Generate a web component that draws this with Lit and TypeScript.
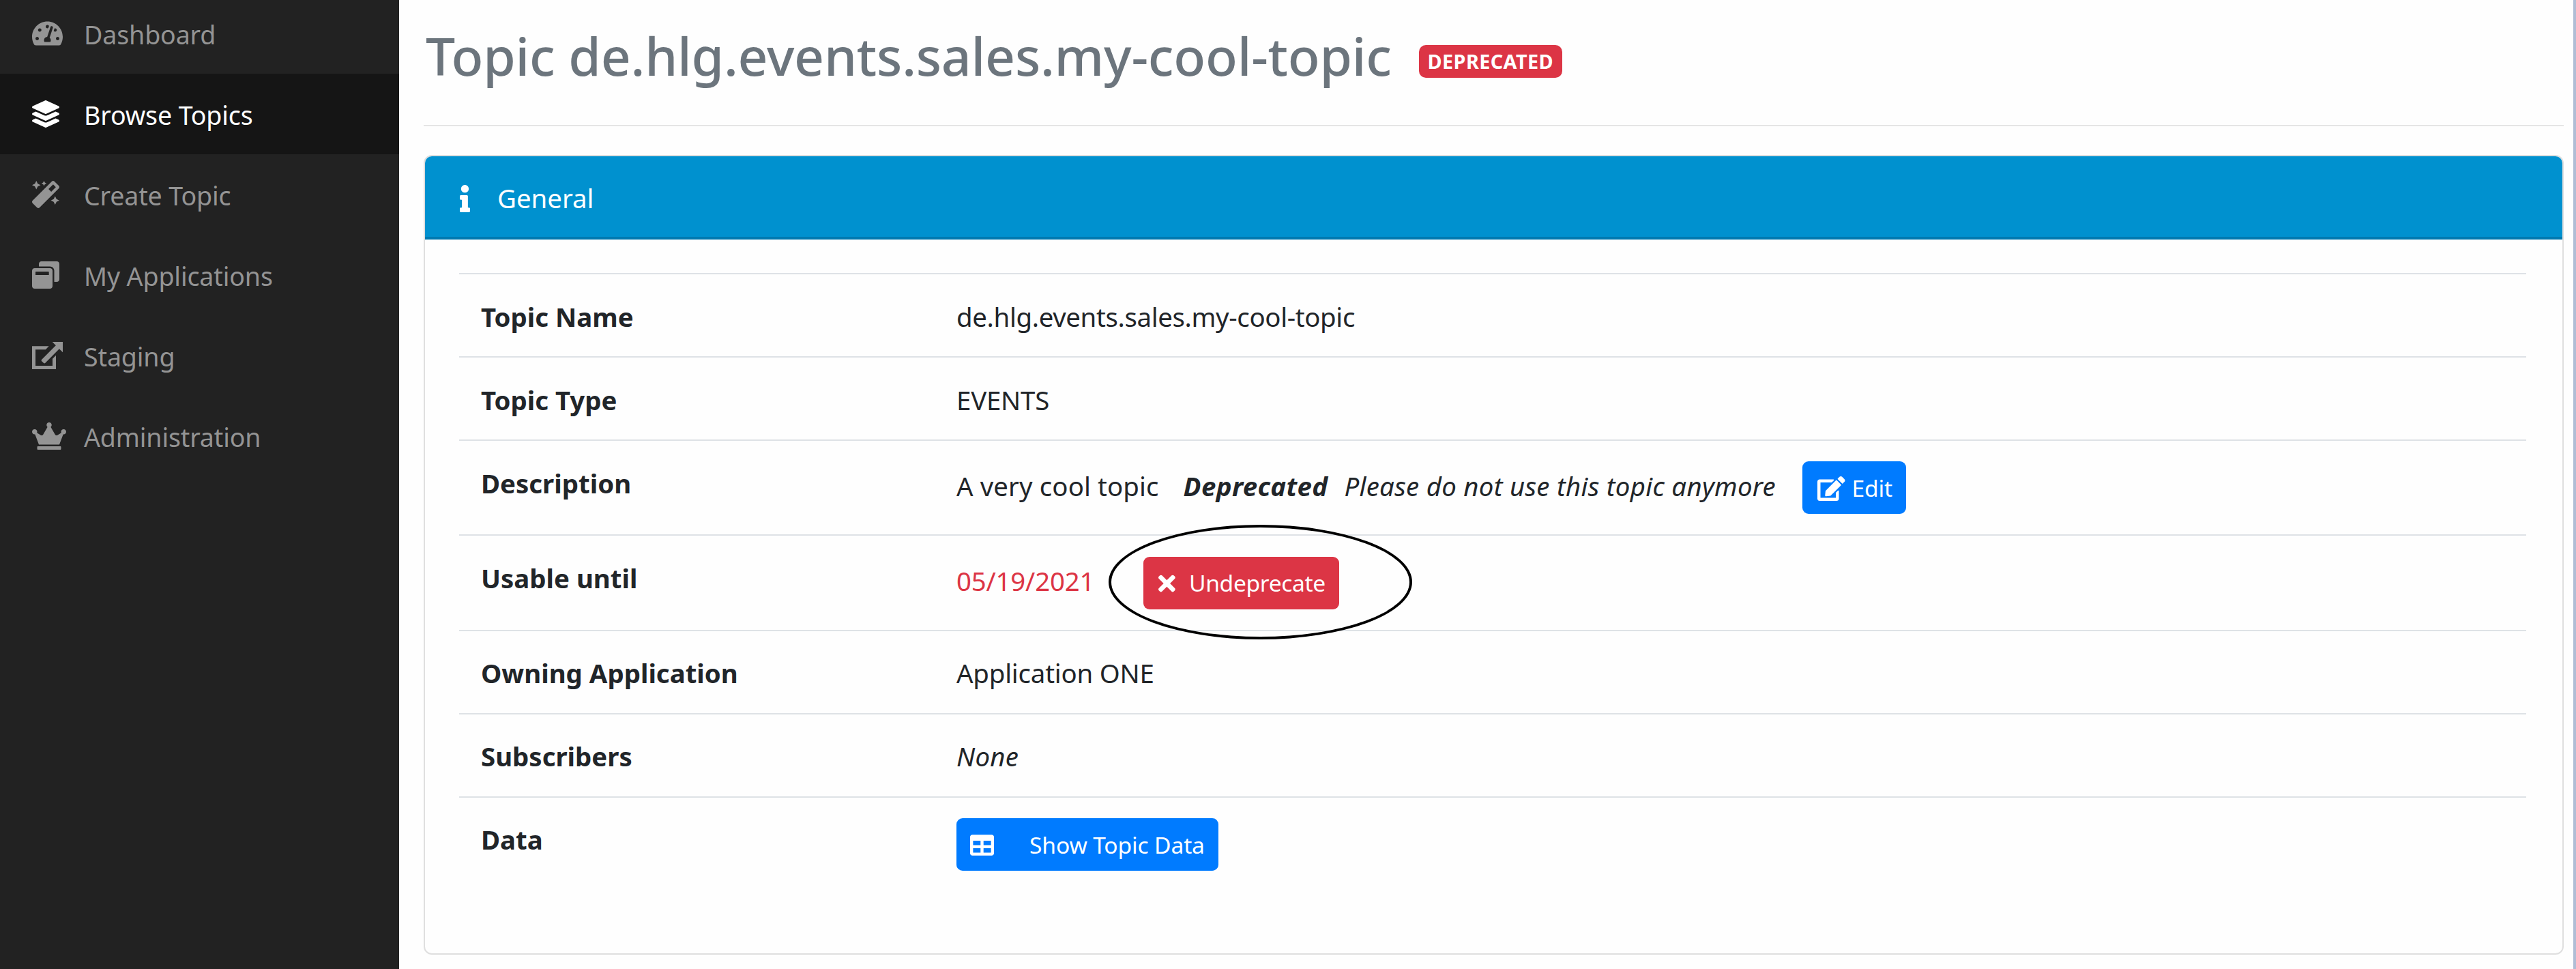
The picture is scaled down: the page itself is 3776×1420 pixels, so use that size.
import { LitElement, html, css } from 'lit';
import { customElement } from 'lit/decorators.js';

const ICONS: Record<string, [number, number, string]> = {
  gauge: [576, 512, 'M288 32C128.94 32 0 160.94 0 320c0 52.8 14.25 102.26 39.06 144.8 5.61 9.62 16.3 15.2 27.44 15.2h443c11.14 0 21.83-5.58 27.44-15.2C561.75 422.26 576 372.8 576 320c0-159.06-128.94-288-288-288zm0 64c14.71 0 26.58 10.13 30.32 23.65-1.11 2.26-2.64 4.23-3.45 6.67l-9.22 27.67c-5.13 3.49-10.97 6.01-17.64 6.01-17.67 0-32-14.33-32-32S270.33 96 288 96zM96 384c-17.67 0-32-14.33-32-32s14.33-32 32-32 32 14.33 32 32-14.33 32-32 32zm48-160c-17.67 0-32-14.33-32-32s14.33-32 32-32 32 14.33 32 32-14.33 32-32 32zm246.77-72.41l-61.33 184C343.13 347.33 352 364.54 352 384c0 11.72-3.38 22.55-8.88 32H232.88c-5.5-9.45-8.88-20.28-8.88-32 0-33.94 26.5-61.43 59.9-63.59l61.34-184.01c4.17-12.56 17.73-19.45 30.36-15.17 12.57 4.19 19.35 17.79 15.17 30.36zm14.66 57.2l15.52-46.55c3.47-1.29 7.13-2.23 11.05-2.23 17.67 0 32 14.33 32 32s-14.33 32-32 32c-11.38-.01-20.89-6.28-26.57-15.22zM480 384c-17.67 0-32-14.33-32-32s14.33-32 32-32 32 14.33 32 32-14.33 32-32 32z'],
  layers: [512, 512, 'M12.41 148.02l232.94 105.67c6.8 3.09 14.49 3.09 21.29 0l232.94-105.67c16.55-7.51 16.55-32.52 0-40.03L266.65 2.31a25.607 25.607 0 0 0-21.29 0L12.41 107.98c-16.55 7.51-16.55 32.53 0 40.04zm487.18 88.28l-58.09-26.33-161.64 73.27c-7.56 3.43-15.59 5.17-23.86 5.17s-16.29-1.74-23.86-5.17L70.51 209.97l-58.1 26.33c-16.55 7.5-16.55 32.5 0 40l232.94 105.59c6.8 3.08 14.49 3.08 21.29 0L499.59 276.3c16.55-7.5 16.55-32.5 0-40zm0 127.8l-57.87-26.23-161.86 73.37c-7.56 3.43-15.59 5.17-23.86 5.17s-16.29-1.74-23.86-5.17L70.29 337.87 12.41 364.1c-16.55 7.5-16.55 32.5 0 40l232.94 105.59c6.8 3.08 14.49 3.08 21.29 0L499.59 404.1c16.55-7.5 16.55-32.5 0-40z'],
  wand: [512, 512, 'M224 96l16-32 32-16-32-16-16-32-16 32-32 16 32 16 16 32zM80 160l26.66-53.33L160 80l-53.34-26.67L80 0 53.34 53.33 0 80l53.34 26.67L80 160zm352 128l-26.66 53.33L352 368l53.34 26.67L432 448l26.66-53.33L512 368l-53.34-26.67L432 288zm70.62-193.77L417.77 9.38C411.53 3.12 403.34 0 395.15 0c-8.19 0-16.38 3.12-22.63 9.38L9.38 372.52c-12.5 12.5-12.5 32.76 0 45.25l84.85 84.85c6.25 6.25 14.44 9.37 22.62 9.37 8.19 0 16.38-3.12 22.63-9.37l363.14-363.15c12.5-12.48 12.5-32.75 0-45.24zM359.45 203.46l-50.91-50.91 86.6-86.6 50.91 50.91-86.6 86.6z'],
  windows: [512, 512, 'M512 48v288c0 26.5-21.5 48-48 48h-48V176c0-44.1-35.9-80-80-80H128V48c0-26.5 21.5-48 48-48h288c26.5 0 48 21.5 48 48zM384 176v288c0 26.5-21.5 48-48 48H48c-26.5 0-48-21.5-48-48V176c0-26.5 21.5-48 48-48h288c26.5 0 48 21.5 48 48zm-68 28c0-6.6-5.4-12-12-12H76c-6.6 0-12 5.4-12 12v52h252v-52z'],
  external: [576, 512, 'M0 80h316l-62 64H64v304h320V316l64-64v260H0zM576 0v196l-66-66-264 268q-14 12-28 0l-38-38q-12-14 0-28l266-266-66-66z'],
  crown: [640, 512, 'M528 448H112c-8.8 0-16 7.2-16 16v32c0 8.8 7.2 16 16 16h416c8.8 0 16-7.2 16-16v-32c0-8.8-7.2-16-16-16zm64-320c-26.5 0-48 21.5-48 48 0 7.1 1.6 13.7 4.4 19.8L476 239.2c-15.4 9.2-35.3 4-44.2-11.6L350.3 85C361 76.2 368 63 368 48c0-26.5-21.5-48-48-48s-48 21.5-48 48c0 15 7 28.2 17.7 37l-81.5 142.6c-8.9 15.6-28.9 20.8-44.2 11.6l-72.3-43.4c2.7-6 4.4-12.7 4.4-19.8 0-26.5-21.5-48-48-48S0 149.5 0 176s21.5 48 48 48c2.6 0 5.2-.4 7.7-.8L128 416h384l72.3-192.8c2.5.4 5.1.8 7.7.8 26.5 0 48-21.5 48-48s-21.5-48-48-48z'],
  info: [192, 512, 'M20 424.229h20V279.771H20c-11.046 0-20-8.954-20-20V212c0-11.046 8.954-20 20-20h112c11.046 0 20 8.954 20 20v212.229h20c11.046 0 20 8.954 20 20V492c0 11.046-8.954 20-20 20H20c-11.046 0-20-8.954-20-20v-47.771c0-11.046 8.954-20 20-20zM96 0C56.235 0 24 32.235 24 72s32.235 72 72 72 72-32.235 72-72S135.764 0 96 0z'],
  times: [352, 512, 'M242.72 256l100.07-100.07c12.28-12.28 12.28-32.19 0-44.48l-22.24-22.24c-12.28-12.28-32.19-12.28-44.48 0L176 189.28 75.93 89.21c-12.28-12.28-32.19-12.28-44.48 0L9.21 111.45c-12.28 12.28-12.28 32.19 0 44.48L109.28 256 9.21 356.07c-12.28 12.28-12.28 32.19 0 44.48l22.24 22.24c12.28 12.28 32.2 12.28 44.48 0L176 322.72l100.07 100.07c12.28 12.28 32.2 12.28 44.48 0l22.24-22.24c12.28-12.28 12.28-32.19 0-44.48L242.72 256z'],
  edit: [576, 512, 'M402.6 83.2l90.2 90.2c3.8 3.8 3.8 10 0 13.8L274.4 405.6l-92.8 10.3c-12.4 1.4-22.9-9.1-21.5-21.5l10.3-92.8L388.8 83.2c3.8-3.8 10-3.8 13.8 0zm162-22.9l-48.8-48.8c-15.2-15.2-39.9-15.2-55.2 0l-35.4 35.4c-3.8 3.8-3.8 10 0 13.8l90.2 90.2c3.8 3.8 10 3.8 13.8 0l35.4-35.4c15.2-15.3 15.2-40 0-55.2zM384 346.2V448H64V128h229.8c3.2 0 6.2-1.3 8.5-3.5l40-40c7.6-7.6 2.2-20.5-8.5-20.5H48C21.5 64 0 85.5 0 112v352c0 26.5 21.5 48 48 48h352c26.5 0 48-21.5 48-48V306.2c0-10.7-12.9-16-20.5-8.5l-40 40c-2.2 2.3-3.5 5.3-3.5 8.5z'],
  table: [512, 512, 'M464 32H48C21.49 32 0 53.49 0 80v352c0 26.51 21.49 48 48 48h416c26.51 0 48-21.49 48-48V80c0-26.51-21.49-48-48-48zM224 416H64v-96h160v96zm0-160H64v-96h160v96zm224 160H288v-96h160v96zm0-160H288v-96h160v96z'],
};

const icon = (name: string) => {
  const [w, h, d] = ICONS[name];
  return html`<svg class="icon" viewBox="0 0 ${w} ${h}"><path fill="currentColor" d=${d}></path></svg>`;
};

const NAV = [
  { label: 'Dashboard', icon: 'gauge' },
  { label: 'Browse Topics', icon: 'layers', active: true },
  { label: 'Create Topic', icon: 'wand' },
  { label: 'My Applications', icon: 'windows' },
  { label: 'Staging', icon: 'external' },
  { label: 'Administration', icon: 'crown' },
];

@customElement('app-root')
export class AppRoot extends LitElement {
  static styles = css`
    :host {
      display: flex;
      width: 3776px;
      height: 1420px;
      overflow: hidden;
      background: #fefefe;
      color: #212529;
      font-family: "Noto Sans", sans-serif;
      font-size: 38.4px;
      line-height: 57.6px;
    }
    .icon {
      display: block;
      flex: none;
    }
    .sidebar {
      width: 585px;
      flex: none;
      background: #222222;
      color: #949494;
      font-size: 37.6px;
    }
    .nav-item {
      display: flex;
      align-items: center;
      height: 117.9px;
      padding-left: 47px;
      letter-spacing: -0.15px;
    }
    .nav-item:first-child {
      margin-top: -9.5px;
    }
    .nav-item.active {
      background: #151515;
      color: #ffffff;
    }
    .nav-item .icon {
      height: 40px;
    }
    .nav-icon {
      width: 76px;
      flex: none;
    }
    .nav-label {
      padding-top: 3px;
    }
    .main {
      flex: 1;
      padding: 0 14px 0 36px;
    }
    .scrollbar {
      width: 4px;
      flex: none;
      background: #b0bdd5;
    }
    .page-title {
      display: flex;
      align-items: center;
      height: 183px;
      border-bottom: 2px solid #e5e5e5;
      color: #6c757d;
      padding-left: 3px;
    }
    h2 {
      margin: 0;
      font-size: 76.8px;
      font-weight: 500;
      line-height: 92px;
      letter-spacing: -0.24px;
      position: relative;
      top: -10px;
    }
    .badge {
      margin: 0 0 12px 40px;
      position: relative;
      top: 4px;
      height: 48px;
      width: 210px;
      box-sizing: border-box;
      background: #dc3545;
      color: #ffffff;
      border-radius: 10px;
      font-size: 28.8px;
      font-weight: 700;
      line-height: 48px;
      text-align: center;
      letter-spacing: 0.4px;
    }
    .card {
      margin-top: 41.5px;
      height: 1172px;
      box-sizing: border-box;
      border: 2.4px solid #dfdfdf;
      border-radius: 12px;
      overflow: hidden;
    }
    .card-header {
      display: flex;
      align-items: center;
      height: 122px;
      box-sizing: border-box;
      border-bottom: 4px solid #0079b0;
      background: #0091cf;
      color: #ffffff;
      padding: 6px 0 0 51px;
    }
    .card-header .icon {
      height: 40px;
      margin-right: 40px;
    }
    table {
      border-collapse: collapse;
      margin: 49.5px 0 0 50px;
      width: 3030px;
    }
    tr {
      border-top: 2.4px solid #dee2e6;
    }
    th,
    td {
      padding: 32.5px 32px 28.5px;
      line-height: 59px;
      vertical-align: top;
      text-align: left;
      letter-spacing: -0.2px;
    }
    th {
      width: 633px;
      font-weight: 700;
      letter-spacing: 0;
    }
    td.with-button {
      padding-top: 30.2px;
      padding-bottom: 30.2px;
      line-height: 57.6px;
    }
    .topic-name {
      letter-spacing: -0.35px;
    }
    .cell-row {
      display: flex;
      align-items: center;
      min-height: 57.6px;
    }
    .cell-row > :not(.btn) {
      padding-bottom: 4px;
    }
    .plain {
      letter-spacing: 0.1px;
    }
    em {
      font-style: italic;
      letter-spacing: 0.27px;
    }
    .deprecated {
      font-weight: 700;
      font-style: italic;
      letter-spacing: 0.36px;
      margin: 0 24px 0 36px;
    }
    .date {
      color: #dc3545;
      margin-right: 72px;
    }
    .btn {
      display: inline-flex;
      align-items: center;
      height: 77px;
      box-sizing: border-box;
      border: 0;
      border-radius: 9px;
      color: #ffffff;
      font: inherit;
      font-size: 33.6px;
      padding: 2px 20px 0;
      letter-spacing: -0.15px;
    }
    .btn-primary {
      background: #007bff;
    }
    .btn-danger {
      background: #dc3545;
      padding: 2px 20px 0 22px;
      letter-spacing: -0.35px;
    }
    .btn-edit {
      margin-left: 39px;
      padding: 2px 20px 0 22px;
    }
    .btn-edit .icon {
      height: 36px;
      margin-right: 10px;
    }
    .btn-danger .icon {
      height: 36px;
      margin-right: 20px;
    }
    .btn-data .icon {
      height: 35px;
      margin-right: 52px;
    }
    .oval {
      position: absolute;
      left: 1625px;
      top: 769px;
      width: 445px;
      height: 168px;
      box-sizing: border-box;
      border: 4px solid #000000;
      border-radius: 50%;
      pointer-events: none;
    }
  `;

  render() {
    return html`
      <nav class="sidebar">
        ${NAV.map(
          (item) => html`
            <div class="nav-item ${item.active ? 'active' : ''}">
              <span class="nav-icon">${icon(item.icon)}</span>
              <span class="nav-label">${item.label}</span>
            </div>
          `
        )}
      </nav>
      <main class="main">
        <div class="page-title">
          <h2>Topic de.hlg.events.sales.my-cool-topic</h2>
          <span class="badge">DEPRECATED</span>
        </div>
        <section class="card">
          <div class="card-header">${icon('info')}<span>General</span></div>
          <table>
            <tr><th>Topic Name</th><td class="topic-name">de.hlg.events.sales.my-cool-topic</td></tr>
            <tr><th>Topic Type</th><td>EVENTS</td></tr>
            <tr>
              <th>Description</th>
              <td class="with-button">
                <div class="cell-row">
                  <span class="plain">A very cool topic</span>
                  <span class="deprecated">Deprecated</span>
                  <em>Please do not use this topic anymore</em>
                  <button class="btn btn-primary btn-edit">${icon('edit')}Edit</button>
                </div>
              </td>
            </tr>
            <tr>
              <th>Usable until</th>
              <td class="with-button">
                <div class="cell-row">
                  <span class="date">05/19/2021</span>
                  <button class="btn btn-danger">${icon('times')}Undeprecate</button>
                </div>
              </td>
            </tr>
            <tr><th>Owning Application</th><td>Application ONE</td></tr>
            <tr><th>Subscribers</th><td><em>None</em></td></tr>
            <tr>
              <th>Data</th>
              <td class="with-button"><button class="btn btn-primary btn-data">${icon('table')}Show Topic Data</button></td>
            </tr>
          </table>
        </section>
      </main>
      <div class="scrollbar"></div>
      <div class="oval"></div>
    `;
  }
}
